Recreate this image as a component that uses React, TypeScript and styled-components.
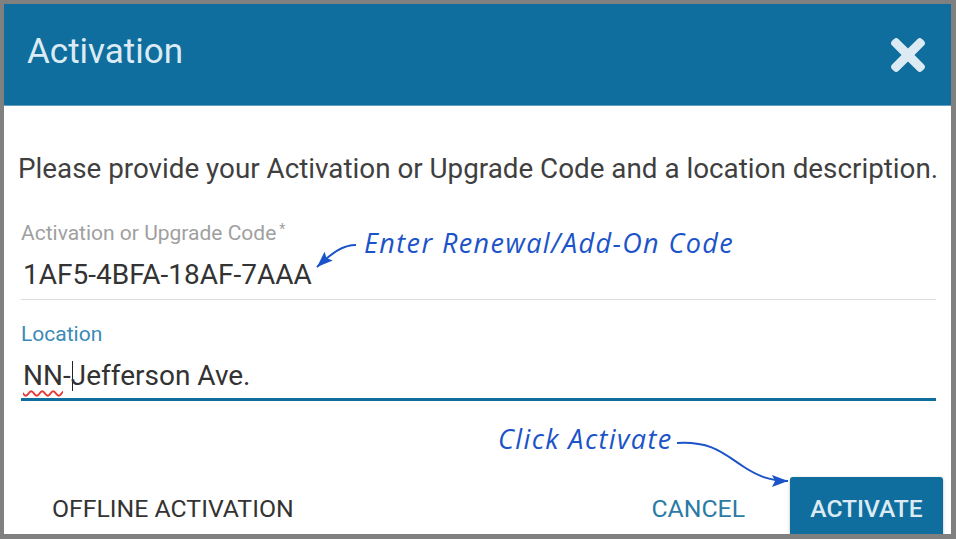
import React from 'react';
import styled, { createGlobalStyle } from 'styled-components';

const GlobalStyle = createGlobalStyle`
  html, body {
    margin: 0;
    padding: 0;
    background: #808080;
  }
  body {
    font-family: Roboto, 'Liberation Sans', Arial, sans-serif;
  }
`;

const BLUE = '#0f6e9e';
const NOTE = '#1b53c8';

const Frame = styled.div`
  position: relative;
  box-sizing: border-box;
  width: 956px;
  height: 539px;
  padding: 4px 5px 5px 4px;
  background: #808080;
`;

const Dialog = styled.div`
  box-sizing: border-box;
  height: 100%;
  background: #fff;
  overflow: hidden;
  display: flex;
  flex-direction: column;
`;

const Header = styled.header`
  box-sizing: border-box;
  flex: 0 0 auto;
  height: 102px;
  display: flex;
  align-items: flex-start;
  justify-content: space-between;
  padding: 31px 26px 0 23px;
  background: ${BLUE};
  border-bottom: 1px solid #5e9fc2;
`;

const Title = styled.h1`
  margin: 0;
  font-size: 35px;
  line-height: 34px;
  font-weight: 400;
  color: #dcebf3;
`;

const CloseButton = styled.button`
  border: 0;
  padding: 0;
  margin-top: 3px;
  background: none;
  width: 34px;
  height: 34px;
  display: flex;
  color: #dcebf3;
`;

const Intro = styled.p`
  margin: 47px 0 0 14px;
  font-size: 27.8px;
  line-height: 32px;
  color: #3f3f3f;
  white-space: nowrap;
`;

const Fields = styled.div`
  display: flex;
  flex-direction: column;
  gap: 22px;
  margin: 32px 15px 0 17px;
`;

const Field = styled.div<{ $focused?: boolean }>`
  display: flex;
  flex-direction: column;
  gap: 13px;
  padding-bottom: ${p => (p.$focused ? '5px' : '7px')};
  border-bottom: ${p => (p.$focused ? `3px solid ${BLUE}` : '1px solid #dedede')};
`;

const Label = styled.label<{ $focused?: boolean }>`
  font-size: 21px;
  line-height: 24px;
  color: ${p => (p.$focused ? '#3a8ab6' : '#a0a0a0')};

  > sup {
    font-size: 14px;
    vertical-align: 6px;
    margin-left: 3px;
  }
`;

const Value = styled.div`
  font-size: 28px;
  line-height: 34px;
  color: #333;
  padding-left: 2px;
  white-space: nowrap;
`;

const Misspelled = styled.span`
  text-decoration: underline wavy #e53935;
  text-decoration-thickness: 1.5px;
  text-underline-offset: 5px;
`;

const Caret = styled.span`
  display: inline-block;
  width: 1.5px;
  height: 30px;
  margin-left: 1px;
  margin-right: -2.5px;
  vertical-align: -6px;
  background: #222;
`;

const Footer = styled.footer`
  margin-top: 76px;
  display: flex;
  align-items: center;
  padding: 0 8px 0 26px;
`;

const TextButton = styled.button<{ $tone?: 'dark' | 'blue' }>`
  border: 0;
  background: none;
  padding: 0 22px;
  height: 62px;
  font-family: Roboto, 'Liberation Sans', Arial, sans-serif;
  font-size: 24.8px;
  font-weight: 400;
  color: ${p => (p.$tone === 'blue' ? '#2b7ba5' : '#333')};
`;

const Spacer = styled.div`
  flex: 1;
`;

const PrimaryButton = styled.button`
  margin-left: 23px;
  border: 0;
  border-radius: 3px;
  height: 62px;
  padding: 0;
  width: 153px;
  background: ${BLUE};
  box-shadow: 0 1px 3px rgba(0, 0, 0, 0.3);
  font-family: Roboto, 'Liberation Sans', Arial, sans-serif;
  font-size: 24.6px;
  font-weight: 500;
  color: #dcebf3;
`;

const Overlay = styled.svg`
  position: absolute;
  left: 0;
  top: 0;
  pointer-events: none;
`;

const Note = styled.div<{ $x: number; $y: number }>`
  position: absolute;
  left: ${p => p.$x}px;
  top: ${p => p.$y}px;
  font-family: 'Open Sans', 'DejaVu Sans', sans-serif;
  font-style: italic;
  font-size: 27px;
  line-height: 30px;
  letter-spacing: 1.4px;
  color: ${NOTE};
  white-space: nowrap;
`;

const CloseIcon = () => (
  <svg width="34" height="34" viewBox="0 80 352 352" fill="currentColor">
    <path d="M242.72 256l100.07-100.07c12.28-12.28 12.28-32.19 0-44.48l-22.24-22.24c-12.28-12.28-32.19-12.28-44.48 0L176 189.28 75.93 89.21c-12.28-12.28-32.19-12.28-44.48 0L9.21 111.45c-12.28 12.28-12.28 32.19 0 44.48L109.28 256 9.21 356.07c-12.28 12.28-12.28 32.19 0 44.48l22.24 22.24c12.28 12.28 32.2 12.28 44.48 0L176 322.72l100.07 100.07c12.28 12.28 32.2 12.28 44.48 0l22.24-22.24c12.28-12.28 12.28-32.19 0-44.48L242.72 256z" />
  </svg>
);

const Arrows = () => (
  <Overlay width="956" height="539" viewBox="0 0 956 539">
    <defs>
      <marker
        id="head"
        markerUnits="userSpaceOnUse"
        markerWidth="16"
        markerHeight="12"
        viewBox="0 0 16 12"
        refX="16"
        refY="6"
        orient="auto"
      >
        <path d="M0 0 L16 6 L0 12 L3 6 Z" fill={NOTE} />
      </marker>
    </defs>
    <path
      d="M356 245 C343 245 333 252 317 267"
      fill="none"
      stroke={NOTE}
      strokeWidth="2"
      markerEnd="url(#head)"
    />
    <path
      d="M677 443 C712 441 724 454 744 467 C758 476 770 481 788 481"
      fill="none"
      stroke={NOTE}
      strokeWidth="2"
      markerEnd="url(#head)"
    />
  </Overlay>
);

export default function App() {
  return (
    <>
      <GlobalStyle />
      <Frame>
        <Dialog>
          <Header>
            <Title>Activation</Title>
            <CloseButton aria-label="Close">
              <CloseIcon />
            </CloseButton>
          </Header>

          <Intro>Please provide your Activation or Upgrade Code and a location description.</Intro>

          <Fields>
            <Field>
              <Label>
                Activation or Upgrade Code<sup>*</sup>
              </Label>
              <Value>1AF5-4BFA-18AF-7AAA</Value>
            </Field>
            <Field $focused>
              <Label $focused>Location</Label>
              <Value>
                <Misspelled>NN</Misspelled>-<Caret />Jefferson Ave.
              </Value>
            </Field>
          </Fields>

          <Footer>
            <TextButton>OFFLINE ACTIVATION</TextButton>
            <Spacer />
            <TextButton $tone="blue">CANCEL</TextButton>
            <PrimaryButton>ACTIVATE</PrimaryButton>
          </Footer>
        </Dialog>

        <Arrows />
        <Note $x={364} $y={228}>Enter Renewal/Add-On Code</Note>
        <Note $x={498} $y={424}>Click Activate</Note>
      </Frame>
    </>
  );
}
